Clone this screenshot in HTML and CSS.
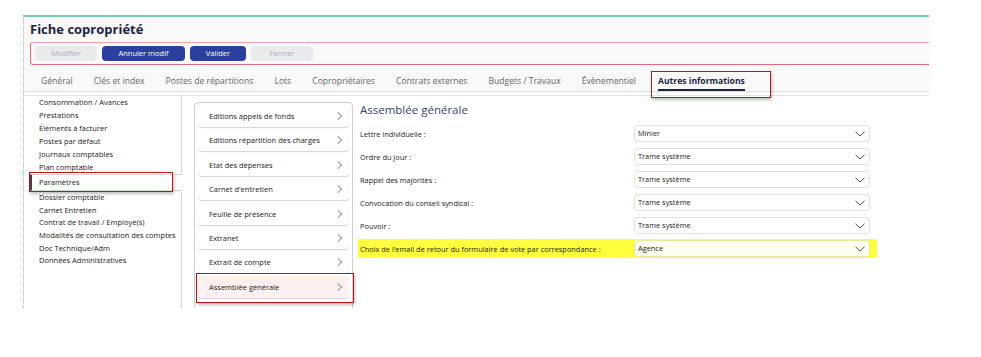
FILE: index.html
```html
<!DOCTYPE html>
<html lang="fr">
<head>
  <meta charset="UTF-8">
  <title>Fiche copropriété</title>
  <link rel="stylesheet" href="styles.css">
</head>
<body>
  <div class="frame">
    <div class="header">
      <h1 class="title">Fiche copropriété</h1>
      <div class="toolbar">
        <button class="btn disabled">Modifier</button>
        <button class="btn primary">Annuler modif</button>
        <button class="btn primary">Valider</button>
        <button class="btn disabled">Fermer</button>
      </div>
      <div class="tabs">
        <span class="tab">Général</span>
        <span class="tab">Clés et index</span>
        <span class="tab">Postes de répartitions</span>
        <span class="tab">Lots</span>
        <span class="tab">Copropriétaires</span>
        <span class="tab">Contrats externes</span>
        <span class="tab">Budgets / Travaux</span>
        <span class="tab">Évènementiel</span>
        <span class="tab active">Autres informations</span>
      </div>
    </div>

    <div class="content">
      <ul class="sidebar">
        <li>Consommation / Avances</li>
        <li>Prestations</li>
        <li>Éléments à facturer</li>
        <li>Postes par défaut</li>
        <li>Journaux comptables</li>
        <li>Plan comptable</li>
        <li class="selected">Paramètres</li>
        <li class="after">Dossier comptable</li>
        <li class="after">Carnet Entretien</li>
        <li class="after">Contrat de travail / Employé(s)</li>
        <li class="after">Modalités de consultation des comptes</li>
        <li class="after">Doc Technique/Adm</li>
        <li class="after">Données Administratives</li>
      </ul>

      <div class="middle">
        <ul class="menu">
          <li>Editions appels de fonds<span class="chev"></span></li>
          <li>Editions répartition des charges<span class="chev"></span></li>
          <li>Etat des dépenses<span class="chev"></span></li>
          <li>Carnet d'entretien<span class="chev"></span></li>
          <li>Feuille de présence<span class="chev"></span></li>
          <li>Extranet<span class="chev"></span></li>
          <li>Extrait de compte<span class="chev"></span></li>
          <li class="selected">Assemblée générale<span class="chev"></span></li>
        </ul>
      </div>

      <div class="form">
        <h2 class="form-title">Assemblée générale</h2>
        <div class="row">
          <label>Lettre individuelle :</label>
          <div class="select">Minier<svg viewBox="0 0 10 6"><path d="M0.5 0.8 L5 5 L9.5 0.8"/></svg></div>
        </div>
        <div class="row">
          <label>Ordre du jour :</label>
          <div class="select">Trame système<svg viewBox="0 0 10 6"><path d="M0.5 0.8 L5 5 L9.5 0.8"/></svg></div>
        </div>
        <div class="row">
          <label>Rappel des majorités :</label>
          <div class="select">Trame système<svg viewBox="0 0 10 6"><path d="M0.5 0.8 L5 5 L9.5 0.8"/></svg></div>
        </div>
        <div class="row">
          <label>Convocation du conseil syndical :</label>
          <div class="select">Trame système<svg viewBox="0 0 10 6"><path d="M0.5 0.8 L5 5 L9.5 0.8"/></svg></div>
        </div>
        <div class="row">
          <label>Pouvoir :</label>
          <div class="select">Trame système<svg viewBox="0 0 10 6"><path d="M0.5 0.8 L5 5 L9.5 0.8"/></svg></div>
        </div>
        <div class="row highlight">
          <label>Choix de l'email de retour du formulaire de vote par correspondance :</label>
          <div class="select">Agence<svg viewBox="0 0 10 6"><path d="M0.5 0.8 L5 5 L9.5 0.8"/></svg></div>
        </div>
      </div>
    </div>
  </div>
</body>
</html>
```

FILE: styles.css
```css
body {
  margin: 0;
  background: #fff;
  font-family: "Open Sans", "Noto Sans", sans-serif;
  color: #222;
}
ul {
  list-style: none;
  margin: 0;
  padding: 0;
}
.frame {
  margin: 15px 0 0 23px;
  width: 905px;
  height: 291px;
  border-top: 2px solid #74c9bb;
  border-left: 1px dotted #b8b8b8;
  overflow: hidden;
}
.header {
  background: #f9f9f9;
}
.title {
  margin: 0;
  padding: 2px 0 0 6px;
  height: 23px;
  font-size: 13px;
  line-height: 20px;
  font-weight: 700;
  color: #1c2541;
}
.toolbar {
  margin-left: 6px;
  height: 21px;
  padding: 0 0 0 4px;
  display: flex;
  align-items: center;
  gap: 5px;
  border: 1px solid #e36a78;
  border-top-color: #efa0a8;
  border-right: none;
  border-radius: 3px 0 0 3px;
}
.btn {
  height: 15px;
  padding: 0;
  border: none;
  border-radius: 4px;
  font-family: inherit;
  font-size: 7.5px;
  line-height: 15px;
  cursor: pointer;
}
.btn.disabled {
  width: 62px;
  background: #e8eaee;
  color: #a9aeb8;
}
.btn.primary {
  background: #2b409c;
  color: #fff;
}
.btn.primary:nth-child(2) {
  width: 83px;
}
.btn.primary:nth-child(3) {
  width: 56px;
}
.tabs {
  height: 18px;
  padding: 8px 0 0 17px;
  display: flex;
  align-items: flex-start;
  gap: 21px;
  border-bottom: 1px solid #dcdcdc;
}
.tab {
  font-size: 8.6px;
  line-height: 16px;
  color: #666;
  white-space: nowrap;
}
.tab.active {
  position: relative;
  margin-left: 1px;
  font-weight: 700;
  color: #1c2541;
  border-bottom: 2px solid #1c2541;
}
.tab.active::after {
  content: "";
  position: absolute;
  left: -7px;
  right: -26px;
  top: -2px;
  bottom: -9px;
  border: 1.5px solid #c0141c;
  box-shadow: 1px 2px 3px rgba(0, 0, 0, 0.25);
}
.content {
  display: flex;
  margin-top: 3px;
  border-top: 1px solid #e4e4e4;
  height: 220px;
}
.sidebar {
  width: 157px;
  flex-shrink: 0;
  border-right: 1px solid #d6d6d6;
  font-size: 7.5px;
}
.sidebar li {
  height: 13px;
  line-height: 13px;
  padding-left: 15px;
  white-space: nowrap;
}
.sidebar li.after {
  height: 12.7px;
  line-height: 12.7px;
}
.sidebar li.selected {
  position: relative;
  height: 15px;
  line-height: 15px;
  margin: 0 -1px 0 6px;
  padding-left: 7px;
  background: #fff;
  border-left: 2px solid #3b4256;
  border-top: 1px solid #d6d6d6;
  border-bottom: 1px solid #d6d6d6;
}
.sidebar li.selected::after {
  content: "";
  position: absolute;
  left: -3px;
  top: -3.5px;
  width: 142px;
  height: 18px;
  border: 1.5px solid #c0141c;
  box-shadow: 1px 2px 3px rgba(0, 0, 0, 0.25);
}
.middle {
  padding: 6px 0 0 12px;
  width: 159px;
  flex-shrink: 0;
}
.menu {
  height: 220px;
  background: #fff;
  border: 1px solid #cfcfcf;
  border-radius: 4px;
  padding: 2px 3px 0 3px;
}
.menu li {
  position: relative;
  height: 22px;
  line-height: 22px;
  margin-bottom: 2.4px;
  padding-left: 11px;
  font-size: 7.5px;
  border-radius: 4px;
  box-shadow: 0 1px 1px rgba(0, 0, 0, 0.18);
  white-space: nowrap;
}
.menu li.selected {
  background: #fdf1ef;
}
.menu li.selected::after {
  content: "";
  position: absolute;
  left: -2px;
  right: -5px;
  top: -3px;
  bottom: -5px;
  border: 1.5px solid #c0141c;
  box-shadow: 1px 2px 3px rgba(0, 0, 0, 0.25);
}
.chev {
  position: absolute;
  right: 8px;
  top: 8px;
  width: 5px;
  height: 5px;
  border-top: 1px solid #9a9a9a;
  border-right: 1px solid #9a9a9a;
  transform: rotate(45deg);
}
.form {
  padding: 5px 0 0 7px;
}
.form-title {
  margin: 0 0 3px 0;
  height: 18px;
  font-size: 11.5px;
  line-height: 18px;
  font-weight: 400;
  color: #36466a;
}
.row {
  display: grid;
  grid-template-columns: 274px 236px;
  align-items: center;
  height: 23px;
  font-size: 7.4px;
}
.row label {
  white-space: nowrap;
}
.row.highlight {
  margin-left: -2px;
  padding: 0 7px 0 2px;
  width: 510px;
  height: 19px;
  margin-top: 2px;
  background: #ffff3d;
}
.select {
  position: relative;
  height: 15px;
  line-height: 15px;
  padding-left: 3px;
  background: #fff;
  border: 1px solid #e0e0e0;
  border-radius: 4px;
}
.highlight .select {
  background: #fffff0;
  border-color: #e8e8a0;
}
.select svg {
  position: absolute;
  right: 4px;
  top: 5px;
  width: 10px;
  height: 6px;
  fill: none;
  stroke: #4a5070;
  stroke-width: 1;
}
```
